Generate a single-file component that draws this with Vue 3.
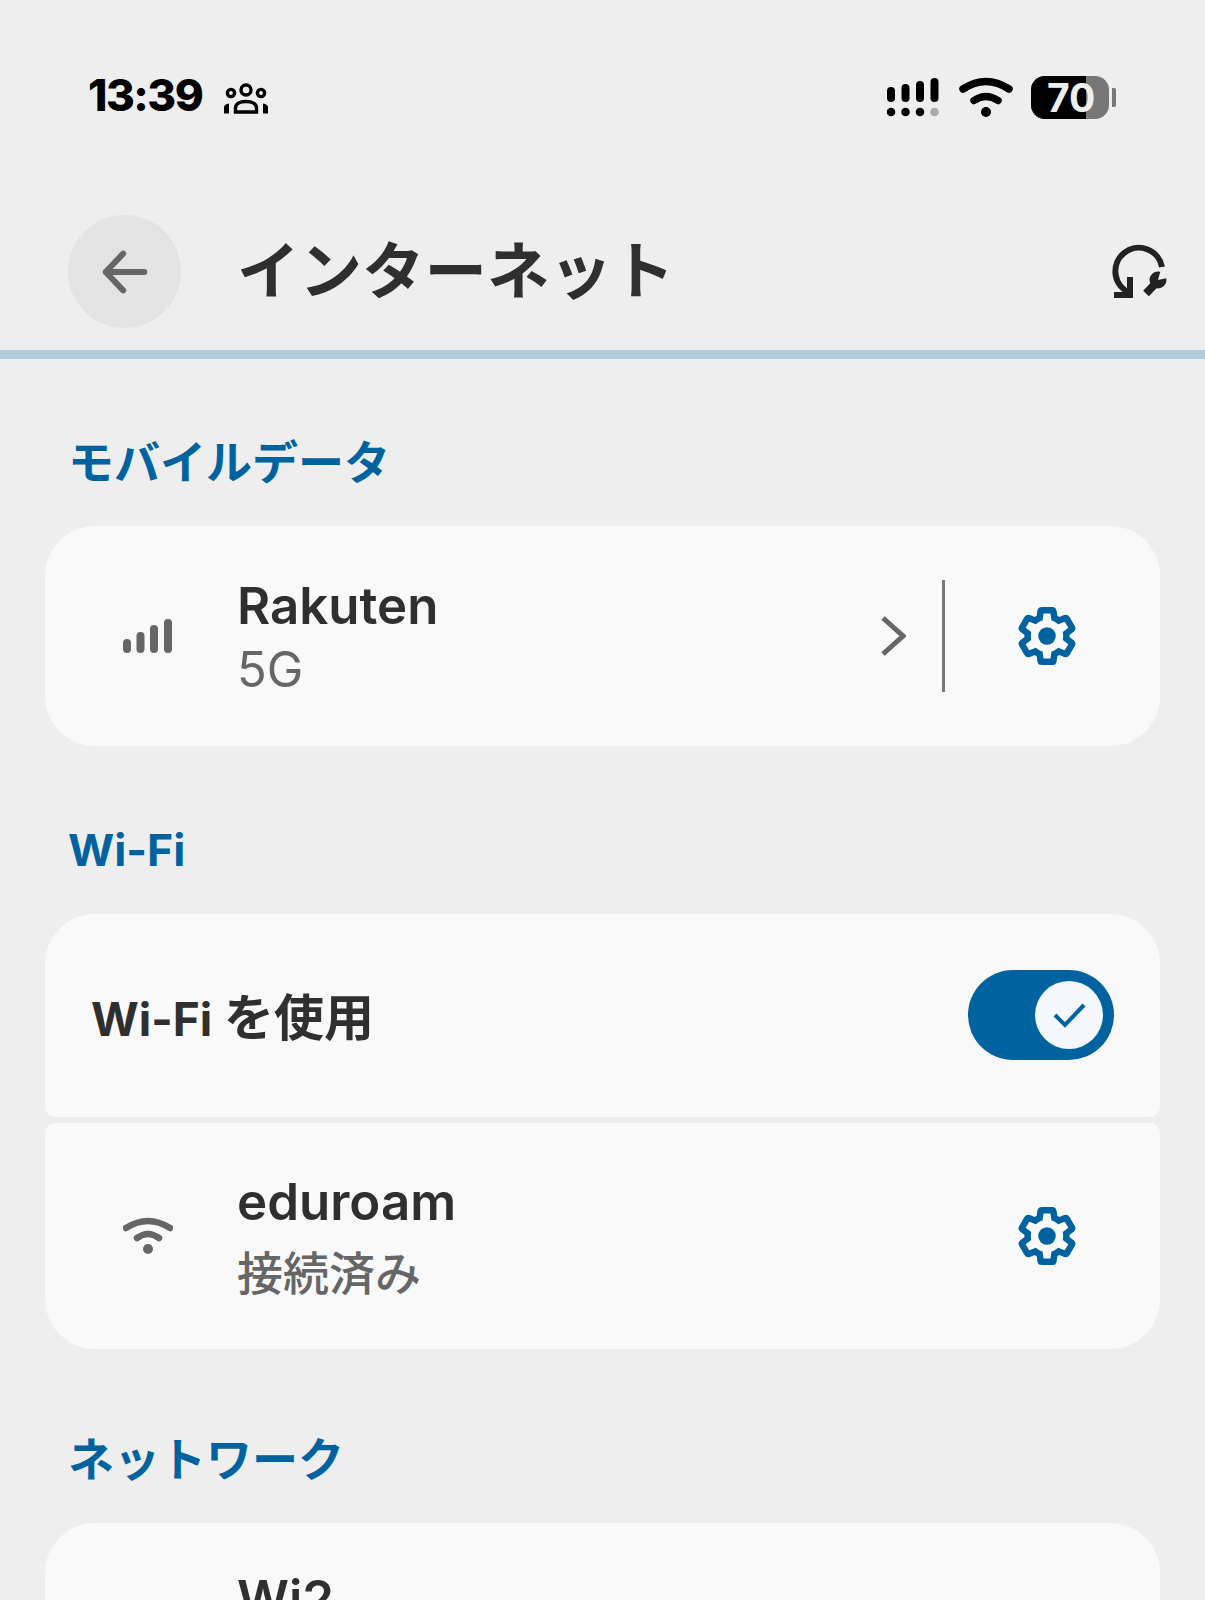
<script setup>
const gear = "M19.43 12.98c.04-.32.07-.64.07-.98 0-.34-.03-.66-.07-.98l2.11-1.65c.19-.15.24-.42.12-.64l-2-3.46c-.09-.16-.26-.25-.44-.25-.06 0-.12.01-.17.03l-2.49 1c-.52-.4-1.08-.73-1.69-.98l-.38-2.65C14.46 2.18 14.25 2 14 2h-4c-.25 0-.46.18-.49.42l-.38 2.65c-.61.25-1.17.59-1.69.98l-2.49-1c-.06-.02-.12-.03-.18-.03-.17 0-.34.09-.43.25l-2 3.46c-.13.22-.07.49.12.64l2.11 1.65c-.04.32-.07.65-.07.98 0 .33.03.66.07.98l-2.11 1.65c-.19.15-.24.42-.12.64l2 3.46c.09.16.26.25.44.25.06 0 .12-.01.17-.03l2.49-1c.52.4 1.08.73 1.69.98l.38 2.65c.03.24.24.42.49.42h4c.25 0 .46-.18.49-.42l.38-2.65c.61-.25 1.17-.59 1.69-.98l2.49 1c.06.02.12.03.18.03.17 0 .34-.09.43-.25l2-3.46c.12-.22.07-.49-.12-.64l-2.11-1.65z";
</script>

<template>
  <div class="screen">
    <div class="status">
      <span class="time">13:39</span>
      <svg class="people" width="48" height="32" viewBox="0 0 48 32" fill="none" stroke="#000" stroke-width="3.4">
        <circle cx="24" cy="7" r="5" />
        <circle cx="9" cy="10" r="3.6" />
        <circle cx="39" cy="10" r="3.6" />
        <path d="M13.5 29v-4c0-4 4-6.5 10.5-6.5S34.500 21 34.500 25v4z" />
        <path d="M2 30.500v-6c0-2 1.500-3.500 5-4v10zM46 30.500v-6c0-2-1.500-3.500-5-4v10z" fill="#000" stroke="none" />
      </svg>
      <div class="status-right">
        <svg width="52" height="42" viewBox="0 0 52 42">
          <g fill="#000">
            <rect x="0" y="10" width="8" height="15" rx="4" />
            <rect x="14.500" y="7" width="8" height="18" rx="4" />
            <rect x="29" y="4" width="8" height="21" rx="4" />
            <rect x="43.500" y="1" width="8" height="24" rx="4" />
            <circle cx="4" cy="35" r="4.300" />
            <circle cx="18.500" cy="35" r="4.300" />
            <circle cx="33" cy="35" r="4.300" />
            <circle cx="47.500" cy="35" r="4.300" fill="#aaa" />
          </g>
        </svg>
        <svg class="wifi-top" width="54" height="42" viewBox="0 0 54 42" fill="none" stroke="#000" stroke-width="7.500" stroke-linecap="round">
          <path d="M4 12Q27-3 50 12" />
          <path d="M15 23.500Q27 15.500 39 23.500" />
          <circle cx="27" cy="35" r="5" fill="#000" stroke="none" />
        </svg>
        <div class="battery">
          <div class="cell"><div class="fill"></div><span class="level">70</span></div>
          <div class="nub"></div>
        </div>
      </div>
    </div>

    <div class="header">
      <div class="back">
        <svg width="46" height="46" viewBox="0 0 50 50" fill="none" stroke="#666" stroke-width="6.500" stroke-linecap="round" stroke-linejoin="round">
          <path d="M46 25H4M23 5L4 25l19 20" />
        </svg>
      </div>
      <h1 class="title">インターネット</h1>
      <svg class="tool" width="60" height="62" viewBox="0 0 60 62" fill="none" stroke="#222" stroke-width="6">
        <path d="M50 24A23.500 23.500 0 1 0 18 50" />
        <path d="M18 34V52H2" stroke-linejoin="miter" />
        <path d="M34 50.500L44 40" stroke-width="8" />
        <circle cx="46" cy="37" r="8.500" fill="#222" stroke="none" />
        <path d="M46 37L49 26H60V34z" fill="#eeeeee" stroke="none" />
      </svg>
    </div>
    <div class="rule"></div>

    <h2 class="section first">モバイルデータ</h2>
    <div class="card row">
      <div class="lead">
        <svg width="50" height="36" viewBox="0 0 50 36" fill="#666">
          <rect x="0" y="21" width="8" height="14" rx="4" />
          <rect x="13.500" y="14" width="8" height="21" rx="4" />
          <rect x="27" y="7" width="8" height="28" rx="4" />
          <rect x="41" y="1" width="8" height="34" rx="4" />
        </svg>
      </div>
      <div class="text">
        <div class="name">Rakuten</div>
        <div class="sub">5G</div>
      </div>
      <div class="actions">
        <svg class="chev" width="26" height="40" viewBox="0 0 26 40" fill="none" stroke="#666" stroke-width="5">
          <path d="M3 2l20 18L3 38" />
        </svg>
        <div class="divider"></div>
        <svg class="gear" width="62" height="62" viewBox="0 0 24 24">
          <path :d="gear" fill="none" stroke="#0063a0" stroke-width="2.500" />
          <circle cx="12" cy="12" r="3.400" fill="#0063a0" />
        </svg>
      </div>
    </div>

    <h2 class="section wifi-head">Wi-Fi</h2>
    <div class="card toggle-row">
      <span class="label"><span class="latin">Wi-Fi</span> を使用</span>
      <div class="switch">
        <div class="knob">
          <svg width="34" height="26" viewBox="0 0 34 26" fill="none" stroke="#0063a0" stroke-width="4">
            <path d="M3 13l10 10L32 3" />
          </svg>
        </div>
      </div>
    </div>
    <div class="card row net">
      <div class="lead">
        <svg width="50" height="38" viewBox="0 0 50 38" fill="none" stroke="#666" stroke-width="6.500" stroke-linecap="round">
          <path d="M3 11Q25-3 47 11" />
          <path d="M14 21Q25 13 36 21" />
          <circle cx="25" cy="32" r="5" fill="#666" stroke="none" />
        </svg>
      </div>
      <div class="text">
        <div class="name">eduroam</div>
        <div class="sub ja">接続済み</div>
      </div>
      <div class="actions">
        <svg class="gear" width="62" height="62" viewBox="0 0 24 24">
          <path :d="gear" fill="none" stroke="#0063a0" stroke-width="2.500" />
          <circle cx="12" cy="12" r="3.400" fill="#0063a0" />
        </svg>
      </div>
    </div>

    <h2 class="section network">ネットワーク</h2>
    <div class="card row last">
      <div class="lead"></div>
      <div class="text">
        <div class="name">Wi2</div>
      </div>
    </div>
  </div>
</template>

<style>
body {
  margin: 0;
}
</style>

<style scoped>
.screen {
  width: 1205px;
  height: 1600px;
  overflow: hidden;
  background: #eeeeee;
  font-family: Inter, "Noto Sans CJK JP", sans-serif;
  color: #2f2f2f;
}
.status {
  display: flex;
  align-items: center;
  height: 196px;
  padding: 0 89px 0 88px;
  box-sizing: border-box;
}
.time {
  margin-bottom: 6px;
  font-family: Inter, sans-serif;
  font-size: 44px;
  font-weight: 800;
  letter-spacing: -1.500px;
  color: #000;
}
.people {
  margin-left: 20px;
  margin-top: 2px;
}
.status-right {
  margin-left: auto;
  display: flex;
  align-items: center;
  gap: 18px;
}
.wifi-top {
  margin-left: 2px;
}
.battery {
  display: flex;
  align-items: center;
  gap: 3px;
  margin-bottom: 2px;
}
.cell {
  position: relative;
  width: 78px;
  height: 43px;
  border-radius: 14px;
  overflow: hidden;
  background: #777;
}
.fill {
  width: 55px;
  height: 100%;
  background: #000;
}
.level {
  position: absolute;
  top: 0;
  left: 16px;
  line-height: 43px;
  font-family: Inter, sans-serif;
  font-size: 39px;
  font-weight: 700;
  color: #eee;
}
.nub {
  width: 4px;
  height: 19px;
  background: #777;
  border-radius: 0 2px 2px 0;
}
.header {
  display: flex;
  align-items: center;
  height: 113px;
  margin-top: 19px;
  padding: 0 33px 0 68px;
}
.back {
  width: 113px;
  height: 113px;
  border-radius: 50%;
  background: #e3e3e3;
  display: flex;
  align-items: center;
  justify-content: center;
}
.title {
  margin: -1px 0 0 56px;
  font-size: 62.500px;
  font-weight: 700;
  line-height: 1;
}
.tool {
  margin-left: auto;
  margin-top: 5px;
}
.rule {
  height: 9px;
  margin-top: 22px;
  background: #b3ccdb;
}
.section {
  margin: 77px 0 0 68px;
  height: 62px;
  font-size: 46px;
  line-height: 60px;
  font-weight: 700;
  color: #0063a0;
}
.section.first {
  margin-top: 73px;
}
.section.wifi-head {
  margin-top: 74px;
  font-size: 44.500px;
}
.section.network {
  margin-top: 80px;
}
.card {
  margin: 32px 45px 0;
  background: #f9f9f9;
  border-radius: 50px;
}
.row {
  display: flex;
  align-items: center;
  height: 220px;
}
.lead {
  width: 192px;
  flex: none;
  padding-left: 78px;
  box-sizing: border-box;
  display: flex;
}
.text {
  margin-top: 3px;
}
.name {
  font-size: 51px;
  font-weight: 600;
  line-height: 64px;
}
.sub {
  font-size: 49px;
  line-height: 64px;
  color: #666;
}
.sub.ja {
  font-size: 46px;
  font-weight: 500;
  line-height: 78px;
}
.actions {
  margin-left: auto;
  display: flex;
  align-items: center;
  padding-right: 82px;
}
.divider {
  width: 3px;
  height: 112px;
  margin: 0 71px 0 36px;
  background: #777;
}
.toggle-row {
  display: flex;
  align-items: center;
  justify-content: space-between;
  height: 203px;
  padding: 0 46px;
  box-sizing: border-box;
  border-radius: 50px 50px 10px 10px;
}
.label {
  font-size: 50px;
  font-weight: 700;
  margin-top: -3px;
}
.latin {
  font-size: 46px;
}
.switch {
  width: 146px;
  height: 90px;
  margin-top: -2px;
  border-radius: 45px;
  background: #0063a0;
  display: flex;
  align-items: center;
  justify-content: flex-end;
  padding-right: 11px;
  box-sizing: border-box;
}
.knob {
  width: 68px;
  height: 68px;
  border-radius: 50%;
  background: #f4f8fd;
  display: flex;
  align-items: center;
  justify-content: center;
}
.net {
  margin-top: 6px;
  height: 226px;
  border-radius: 10px 10px 50px 50px;
}
.net .text {
  margin-top: 10px;
}
.last {
  height: 218px;
  align-items: flex-start;
  padding-top: 41px;
  box-sizing: border-box;
}
</style>
